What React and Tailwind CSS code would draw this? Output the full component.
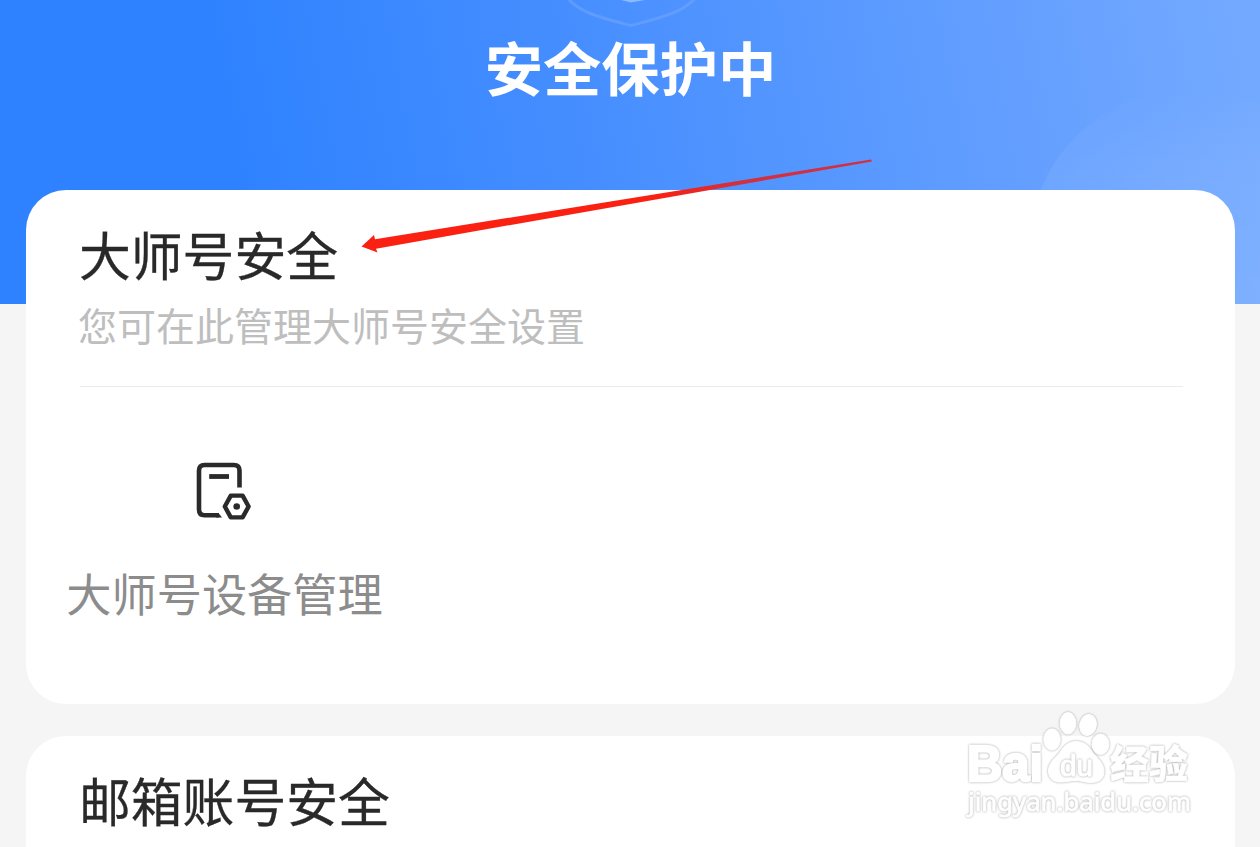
const SectionCard = ({ title, description, className, children }) => {
    return (
        <section className={`rounded-[40px] bg-white pl-[54px] pr-[52px] ${className}`}>
            <h2 className="-indent-[1px] text-[51.8px] leading-[60px] text-[#292929] [-webkit-text-stroke:0.3px_#292929]">
                {title}
            </h2>
            {description && (
                <p className="mt-[17px] border-b border-[#ececec] pb-[39px] text-[39px] leading-[46px] text-[#bebebe] -indent-[2px]">
                    {description}
                </p>
            )}
            {children}
        </section>
    );
};

const DeviceIcon = () => (
    <svg className="block h-[60px] w-[60px]" viewBox="0 0 60 60" fill="none" stroke="#2a2a2a">
        <path d="M44.5 27.5V10.5Q44.5 5 39 5H9.5Q4 5 4 10.5V49.5Q4 55.2 9.5 55.2H24" strokeWidth="4.6" />
        <path d="M21 52.9H23.5L27 57.5H21Z" fill="#2a2a2a" stroke="none" />
        <path d="M14.2 16.5H34" strokeWidth="4.8" />
        <path d="M35.8 35.6H47.6L53.6 46.5L47.6 57.4H35.8L29.8 46.5Z" strokeWidth="4.4" strokeLinejoin="round" />
        <circle cx="41.7" cy="46.5" r="3.3" fill="#2a2a2a" stroke="none" />
    </svg>
);

const Arrow = () => (
    <svg className="absolute left-[350px] top-[150px]" width="530" height="110" viewBox="350 150 530 110">
        <defs>
            <linearGradient id="arrow" gradientUnits="userSpaceOnUse" x1="660" y1="0" x2="740" y2="0">
                <stop offset="0" stopColor="#fa2113" />
                <stop offset="1" stopColor="#d0303f" />
            </linearGradient>
        </defs>
        <path d="M361.5 246.5 374 235 375 239.3 871 159.6 872 161.4 376 248.7 377.5 252.5Z" fill="url(#arrow)" />
    </svg>
);

const outline = "[filter:drop-shadow(0_0_0.8px_#a3a3a3)]";

const Watermark = () => (
    <svg
        className="absolute left-[950px] top-[700px]"
        width="260"
        height="130"
        viewBox="950 700 260 130"
        fill="#fff"
        stroke="#fff"
        strokeWidth="1"
    >
        <text x="967" y="781" fontSize="50" fontWeight="700" textLength="76" lengthAdjust="spacingAndGlyphs" strokeWidth="2.4" className={`font-['Liberation_Sans'] ${outline}`}>
            Bai
        </text>
        {/* paw */}
        <g className={outline}>
            <ellipse cx="1052" cy="739.5" rx="8.3" ry="10.7" />
            <ellipse cx="1068" cy="723.3" rx="7.9" ry="10.8" />
            <ellipse cx="1088" cy="725" rx="8.3" ry="10.5" transform="rotate(12 1088 725)" />
            <ellipse cx="1100.5" cy="744.2" rx="8.5" ry="10.3" />
            <path d="M1076 741.5C1083 741.5 1088 745 1091 750C1095 757 1103.5 761 1104 771C1104 779 1099 782.5 1091 782.5C1085 782.5 1081 780.5 1076 780.5C1070 780.5 1066 782.5 1059 782C1052 781.5 1048 777 1048.5 770C1049 762 1056 758 1061 751C1065 745 1069 741.5 1076 741.5Z" />
        </g>
        <text x="1060" y="775.5" fontSize="30" textLength="33" lengthAdjust="spacingAndGlyphs" strokeWidth="1.2" className={`font-['Liberation_Sans'] ${outline}`}>
            du
        </text>
        <text x="1110" y="778" fontSize="39" fontWeight="900" textLength="78" strokeWidth="0.6" className={`font-['Noto_Sans_CJK_SC'] ${outline}`}>
            经验
        </text>
        <text x="968" y="811" fontSize="26" textLength="223" lengthAdjust="spacingAndGlyphs" strokeWidth="0.8" className={`font-['Noto_Sans'] ${outline}`}>
            jingyan.baidu.com
        </text>
    </svg>
);

export default function App() {
    return (
        <div className="relative h-[847px] w-[1260px] overflow-hidden bg-[#f5f5f5] font-['Noto_Sans_CJK_SC',sans-serif]">
            {/* header background */}
            <svg className="absolute left-0 top-0" width="1260" height="304" viewBox="0 0 1260 304">
                <defs>
                    <linearGradient id="header" gradientUnits="userSpaceOnUse" x1="240" y1="190" x2="1230" y2="0">
                        <stop offset="0" stopColor="#2f82ff" />
                        <stop offset="0.35" stopColor="#468eff" />
                        <stop offset="0.75" stopColor="#629eff" />
                        <stop offset="1" stopColor="#73a9ff" />
                    </linearGradient>
                    <linearGradient id="bubble" x1="0" y1="0" x2="0" y2="1">
                        <stop offset="0" stopColor="#fff" stopOpacity="0" />
                        <stop offset="0.25" stopColor="#fff" stopOpacity="0.06" />
                        <stop offset="1" stopColor="#fff" stopOpacity="0.12" />
                    </linearGradient>
                </defs>
                <rect width="1260" height="304" fill="url(#header)" />
                <circle cx="1190" cy="250" r="161" fill="url(#bubble)" />
                <path d="M567 -3C578 13 606 19 631 25.5C656 19 684 13 696 -3" fill="none" stroke="#7fb0ff" strokeOpacity="0.4" strokeWidth="3" />
                <path d="M621 0 631 2.5 645 0Z" fill="#a9cbff" fillOpacity="0.7" />
            </svg>

            <div className="relative flex flex-col pl-[26px] pr-[25px]">
                <h1 className="h-[190px] pt-[32px] text-center text-[58.3px] font-bold leading-[68px] text-white">
                    安全保护中
                </h1>

                <SectionCard
                    title="大师号安全"
                    description="您可在此管理大师号安全设置"
                    className="h-[514px] pt-[34px]"
                >
                    <div className="-ml-[14px] mt-[73px] flex w-[317px] flex-col items-center">
                        <DeviceIcon />
                        <span className="mt-[47px] whitespace-nowrap text-[45.2px] leading-[52px] text-[#8c8c8c]">
                            大师号设备管理
                        </span>
                    </div>
                </SectionCard>

                <SectionCard title="邮箱账号安全" className="mt-[32px] h-[200px] pt-[34px]" />
            </div>

            <Arrow />
            <Watermark />
        </div>
    );
}
